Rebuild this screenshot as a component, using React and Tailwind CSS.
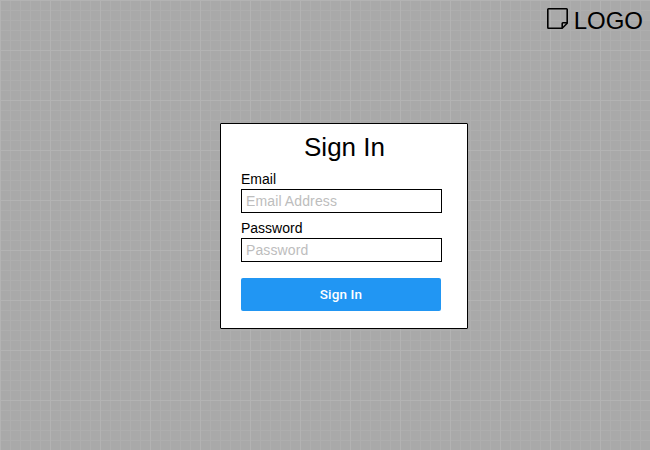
function NoteIcon() {
  return (
    <svg width="21" height="21" viewBox="0 0 21 21" fill="none" stroke="#000" className="mt-2 shrink-0">
      <path d="M15.2 20.2H1.5Q0.8 20.2 0.8 19.5V1.5Q0.8 0.8 1.5 0.8H19.5Q20.2 0.8 20.2 1.5V15.2L15.2 20.2V15.5Q15.2 14.8 15.9 14.8H20.2" strokeWidth="1.6" />
    </svg>
  );
}

function Field({ label, type, placeholder }) {
  return (
    <label className="block h-[49px] text-[14px] leading-[16px] text-black">
      <span className="block h-[18px]">{label}</span>
      <input
        type={type}
        placeholder={placeholder}
        className="block h-6 w-[201px] border border-black bg-white px-1 py-0 text-[14px] text-black outline-none placeholder:tracking-[0.12px] placeholder:text-[#bdbdbd]"
      />
    </label>
  );
}

export default function App() {
  return (
    <div className="flex h-[450px] w-[650px] flex-col overflow-hidden bg-[#a9a9a9] bg-[linear-gradient(to_right,#b3b3b3_1px,transparent_1px),linear-gradient(to_bottom,#b3b3b3_1px,transparent_1px),linear-gradient(to_right,#aeaeae_1px,transparent_1px),linear-gradient(to_bottom,#aeaeae_1px,transparent_1px)] bg-[size:50px_50px,50px_50px,10px_10px,10px_10px] font-['Liberation_Sans',Arial,sans-serif]">
      <header className="flex h-[123px] shrink-0 items-start justify-end gap-1.5 pr-[7px]">
        <NoteIcon />
        <span className="mt-[7px] text-[24px] leading-[28px] text-black">LOGO</span>
      </header>
      <main className="ml-[220px] h-[206px] w-[248px] rounded-[1px] border border-black bg-white pl-5">
        <h1 className="mt-2 h-[39px] w-[207px] text-center text-[26px] leading-[30px] text-black">Sign In</h1>
        <Field label="Email" type="email" placeholder="Email Address" />
        <Field label="Password" type="password" placeholder="Password" />
        <button className="mt-[9px] flex h-[33px] w-[200px] items-center justify-center rounded-[2px] bg-[#2196f3] font-['Roboto',sans-serif] text-[13.5px] font-medium tracking-[0.14px] text-white">
          Sign In
        </button>
      </main>
    </div>
  );
}
